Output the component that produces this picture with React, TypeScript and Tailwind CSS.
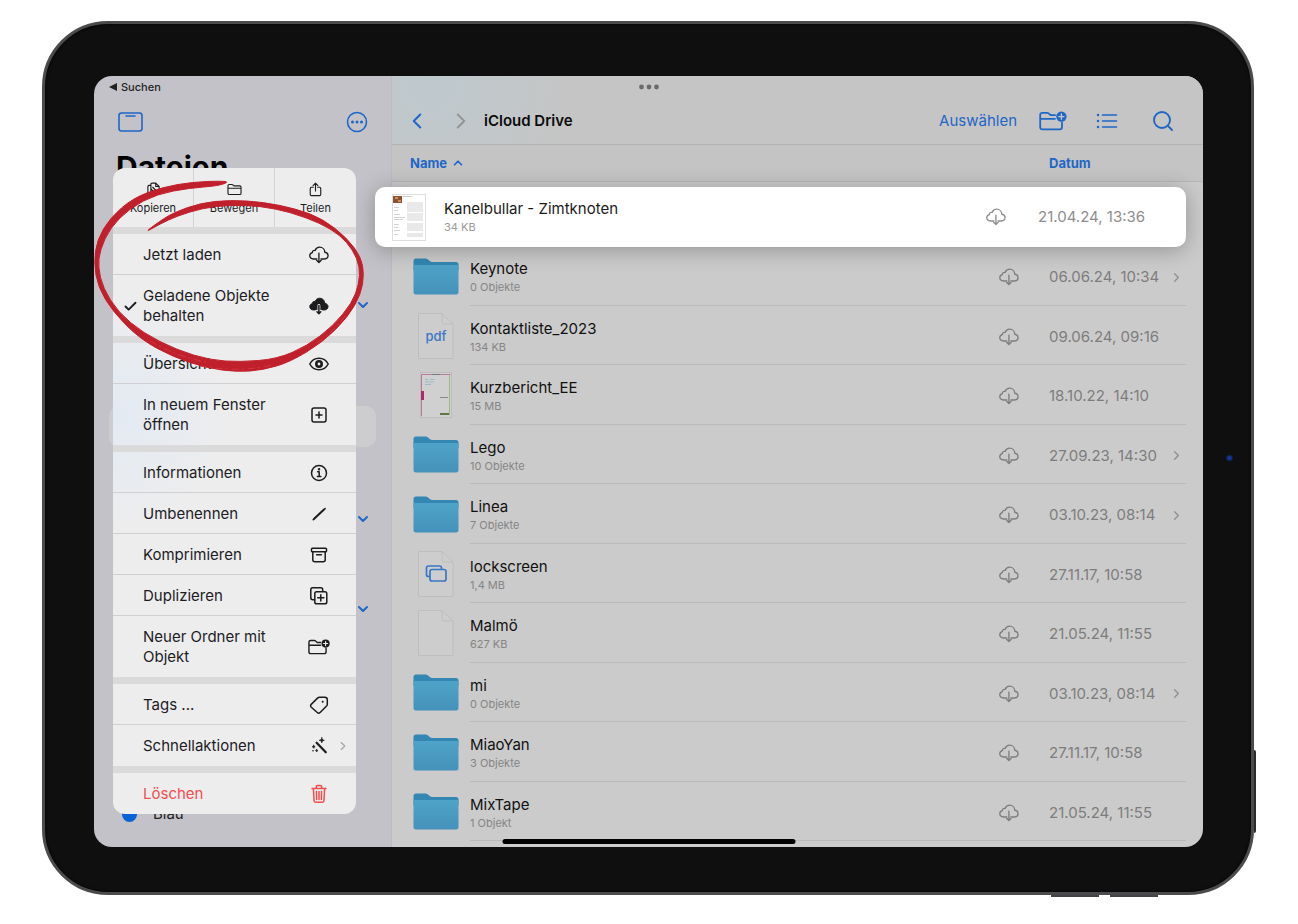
import type { ReactNode } from 'react'
import { ChevronDown, ChevronLeft, ChevronRight, ChevronUp, Check, Search } from 'lucide-react'

type Kind = 'folder' | 'pdf' | 'report' | 'image' | 'blank'

interface FileItem {
  name: string
  info: string
  date: string
  kind: Kind
  opens?: boolean
}

interface MenuItem {
  label: string
  icon: ReactNode
  checked?: boolean
  submenu?: boolean
  danger?: boolean
}

const files: FileItem[] = [
  { name: 'Keynote', info: '0 Objekte', date: '06.06.24, 10:34', kind: 'folder', opens: true },
  { name: 'Kontaktliste_2023', info: '134 KB', date: '09.06.24, 09:16', kind: 'pdf' },
  { name: 'Kurzbericht_EE', info: '15 MB', date: '18.10.22, 14:10', kind: 'report' },
  { name: 'Lego', info: '10 Objekte', date: '27.09.23, 14:30', kind: 'folder', opens: true },
  { name: 'Linea', info: '7 Objekte', date: '03.10.23, 08:14', kind: 'folder', opens: true },
  { name: 'lockscreen', info: '1,4 MB', date: '27.11.17, 10:58', kind: 'image' },
  { name: 'Malmö', info: '627 KB', date: '21.05.24, 11:55', kind: 'blank' },
  { name: 'mi', info: '0 Objekte', date: '03.10.23, 08:14', kind: 'folder', opens: true },
  { name: 'MiaoYan', info: '3 Objekte', date: '27.11.17, 10:58', kind: 'folder' },
  { name: 'MixTape', info: '1 Objekt', date: '21.05.24, 11:55', kind: 'folder' },
]

const CLOUD =
  'M4.6 13.2C2.4 13.2.8 11.7.8 9.7.8 8 2 6.8 3.5 6.4 3.5 4.8 4.8 3.9 6.4 4.2 7.2 2.1 9 .8 11.2.8c3 0 5.3 2.3 5.4 5.3 2 .3 3.4 1.7 3.4 3.5 0 2.1-1.6 3.6-3.8 3.6'

function CloudDown({ className }: { className?: string }) {
  return (
    <svg viewBox="0 0 21 18" width="20" height="18" fill="none" stroke="currentColor" strokeWidth="1.4" strokeLinecap="round" strokeLinejoin="round" className={className}>
      <path d={`${CLOUD}h-3.6M4.6 13.2h3.6`} />
      <path d="M10.4 7v9.8M8 14.6l2.4 2.4 2.4-2.4" />
    </svg>
  )
}

function CloudDownFilled() {
  return (
    <svg viewBox="0 0 21 18" width="20" height="18" fill="none" strokeLinecap="round" strokeLinejoin="round">
      <path d={`${CLOUD}z`} fill="currentColor" stroke="currentColor" />
      <path d="M10.4 8.5v8M8 14.6l2.4 2.4 2.4-2.4" stroke="#ededee" strokeWidth="3" />
      <path d="M10.4 8.5v8M8.4 15l2 2 2-2" stroke="currentColor" strokeWidth="1.6" />
    </svg>
  )
}

// Shared frame for the 20px line icons
function Glyph({ children, size = 20 }: { children: ReactNode; size?: number }) {
  return (
    <svg viewBox="0 0 20 20" width={size} height={size} fill="none" stroke="currentColor" strokeWidth="1.5" strokeLinecap="round" strokeLinejoin="round">
      {children}
    </svg>
  )
}

function FolderPlus({ width, height, plus }: { width: number; height: number; plus: string }) {
  return (
    <svg viewBox="0 0 28 20" width={width} height={height} fill="none" stroke="currentColor" strokeWidth="1.8" strokeLinecap="round" strokeLinejoin="round">
      <path d="M16 4.2h-4.2L9.6 2.4C9.2 2 8.8 1.8 8.2 1.8H3.4C2 1.8 1.2 2.6 1.2 4v12c0 1.6.8 2.4 2.4 2.4h17c1.6 0 2.4-.8 2.4-2.4v-4.4M1.2 7.8H16" />
      <circle cx="22.4" cy="5.6" r="5.2" fill="currentColor" stroke="none" />
      <path d="M22.4 3v5.2M19.8 5.6H25" stroke={plus} strokeWidth="1.4" />
    </svg>
  )
}

const icons = {
  copy: (
    <Glyph size={15}>
      <path d="M6 4.5H4A1.5 1.5 0 0 0 2.5 6v11A1.5 1.5 0 0 0 4 18.500h7.500" />
      <path d="M13 1.500H8A1.500 1.500 0 0 0 6.500 3v10.500A1.500 1.500 0 0 0 8 15h8a1.500 1.500 0 0 0 1.500-1.500V6zM13 1.500V6h4.500M9 7l5 5M6.500 9l5 5.500" />
    </Glyph>
  ),
  folder: (
    <Glyph size={15}>
      <path d="M1.300 5.200c0-1.200.6-1.800 1.800-1.800h3.500c.6 0 1 .2 1.400.5l1.300 1.200h7.600c1.200 0 1.800.6 1.800 1.800v8c0 1.200-.6 1.800-1.800 1.800H3.100c-1.200 0-1.800-.6-1.800-1.800zM1.300 8.300h17.400" />
    </Glyph>
  ),
  share: (
    <Glyph size={15}>
      <path d="M7 7H4.500C3.600 7 3 7.600 3 8.500v8c0 1 .6 1.600 1.500 1.600h11c1 0 1.500-.6 1.500-1.600v-8c0-.9-.5-1.500-1.500-1.500H13M10 12V1.800M6.800 4.800 10 1.600l3.200 3.200" />
    </Glyph>
  ),
  eye: (
    <Glyph>
      <path d="M.8 10C2.500 6.700 5.900 4.200 10 4.200s7.500 2.500 9.200 5.800c-1.700 3.300-5.100 5.800-9.200 5.800S2.500 13.300.8 10z" />
      <circle cx="10" cy="10" r="2.700" strokeWidth="2.600" />
    </Glyph>
  ),
  window: (
    <Glyph>
      <rect x="3" y="3" width="14" height="14" rx="2" />
      <path d="M10 7v6M7 10h6" />
    </Glyph>
  ),
  info: (
    <Glyph>
      <circle cx="10" cy="10" r="7.500" />
      <path d="M8.700 8.800h1.500v4.400M8.400 13.400h3.500" />
      <circle cx="10" cy="6.200" r=".5" fill="currentColor" />
    </Glyph>
  ),
  pencil: (
    <Glyph>
      <path d="M5.200 14.800 15 5.600" strokeWidth="2" />
      <path d="m4.200 15.800 1-1M15.800 4.900l.3-.3" />
    </Glyph>
  ),
  archive: (
    <Glyph>
      <rect x="2.500" y="3.200" width="15" height="3.600" rx=".8" />
      <path d="M3.800 6.800v8c0 1.300.7 2 2 2h8.400c1.300 0 2-.7 2-2v-8M7.600 9.800h4.800" />
    </Glyph>
  ),
  duplicate: (
    <Glyph>
      <path d="M5.500 13.700H3.700c-1.200 0-1.900-.7-1.900-1.900V3.700c0-1.200.7-1.900 1.900-1.900h8.100c1.200 0 1.900.7 1.900 1.900v1.800" />
      <rect x="5.800" y="5.800" width="12" height="12" rx="1.900" />
      <path d="M11.800 8.700v6.200M8.700 11.800h6.200" />
    </Glyph>
  ),
  tag: (
    <Glyph>
      <path d="m2.200 9.400 6.600-6.500c.5-.5 1-.7 1.700-.7h5.300c1.600 0 2.500.9 2.500 2.500v4.500c0 .8-.2 1.300-.7 1.800l-6.500 6.500c-.9.900-1.900.9-2.800 0l-6-5.300c-.9-.9-1-1.900-.1-2.800z" />
      <circle cx="13.700" cy="6.700" r="1" fill="currentColor" stroke="none" />
    </Glyph>
  ),
  wand: (
    <Glyph>
      <path d="m7.600 6.700 9.200 9.600" strokeWidth="2.200" />
      <path d="M12.800 1.800c.3 1.700.8 2.200 2.500 2.500-1.700.3-2.200.8-2.500 2.500-.3-1.700-.8-2.200-2.500-2.500 1.700-.3 2.200-.8 2.500-2.500zM4.700 9.300c.2 1 .5 1.300 1.500 1.500-1 .2-1.300.5-1.500 1.500-.2-1-.5-1.300-1.500-1.500 1-.2 1.300-.5 1.500-1.500zM7.700 13.500c.1.800.3 1 1.100 1.100-.8.200-1 .4-1.100 1.200-.2-.8-.4-1-1.200-1.200.8-.1 1-.3 1.200-1.100z" fill="currentColor" strokeWidth=".8" />
      <circle cx="4" cy="14.800" r=".8" fill="currentColor" stroke="none" />
    </Glyph>
  ),
  trash: (
    <Glyph>
      <path d="M3 4.500h14M7.300 4.300V2.800c0-.7.500-1.200 1.200-1.200h3c.7 0 1.200.5 1.200 1.200v1.500M4.400 4.700l.6 11.500c.1 1.300.8 2 2 2h6c1.200 0 1.900-.7 2-2l.6-11.500M10 7.500v8M7.400 7.500l.3 8M12.600 7.500l-.3 8" />
    </Glyph>
  ),
}

const quickActions = [
  { label: 'Kopieren', icon: icons.copy },
  { label: 'Bewegen', icon: icons.folder },
  { label: 'Teilen', icon: icons.share },
]

const menuGroups: MenuItem[][] = [
  [
    { label: 'Jetzt laden', icon: <CloudDown /> },
    { label: 'Geladene Objekte behalten', icon: <CloudDownFilled />, checked: true },
  ],
  [
    { label: 'Übersicht', icon: icons.eye },
    { label: 'In neuem Fenster öffnen', icon: icons.window },
  ],
  [
    { label: 'Informationen', icon: icons.info },
    { label: 'Umbenennen', icon: icons.pencil },
    { label: 'Komprimieren', icon: icons.archive },
    { label: 'Duplizieren', icon: icons.duplicate },
    { label: 'Neuer Ordner mit Objekt', icon: <FolderPlus width={22} height={16} plus="#ededee" /> },
  ],
  [
    { label: 'Tags ...', icon: icons.tag },
    { label: 'Schnellaktionen', icon: icons.wand, submenu: true },
  ],
  [{ label: 'Löschen', icon: icons.trash, danger: true }],
]

function FolderIcon() {
  return (
    <svg viewBox="0 0 46 37" width="46" height="37">
      <defs>
        <linearGradient id="folder" x1="0" y1="0" x2="0" y2="1">
          <stop offset="0" stopColor="#4fa3c8" />
          <stop offset="1" stopColor="#4591bb" />
        </linearGradient>
      </defs>
      <path d="M.5 3C.5 1.500 1.500.5 3 .5h9.500c1 0 1.800.3 2.500 1l2 1.700c.7.6 1.300.8 2.200.8H43c1.500 0 2.500 1 2.500 2.500V12H.5z" fill="#3486b3" />
      <path d="M.5 7h45v27c0 1.500-.8 2.500-2.300 2.500H2.800C1.300 36.500.5 35.500.5 34z" fill="url(#folder)" />
    </svg>
  )
}

function PageIcon({ children }: { children?: ReactNode }) {
  return (
    <svg viewBox="0 0 36 46" width="36" height="46" fill="none" stroke="#bebebe">
      <path d="M.5.5h23.500l11 10.500v34.500H.5z" fill="#cdcdcd" />
      <path d="M24 .5V9c0 1.300.7 2 2 2h9" />
      {children}
    </svg>
  )
}

function FileIcon({ kind }: { kind: Kind }) {
  if (kind === 'folder') return <FolderIcon />
  if (kind === 'report') {
    return (
      <svg viewBox="0 0 32 46" width="32" height="46">
        <rect x=".5" y=".5" width="31" height="45" fill="#d0d0d0" stroke="#bdbdbd" />
        <path d="M1.500 44V2.500h29" fill="none" stroke="#b87a9b" />
        <path d="M29.500 3v40" stroke="#9fb583" />
        <path d="M12 2.500h8" stroke="#777" />
        <rect x="1" y="19" width="3" height="9" fill="#b3246b" />
        <path d="M5 7.500h3M10 7.500h5M5 10h9M5 12.500h6" stroke="#9fb9c6" />
        <path d="M20 25.500h8" stroke="#888" />
        <path d="M20 42h9" stroke="#5d7a45" strokeWidth="2" />
      </svg>
    )
  }
  return (
    <span className="relative block">
      <PageIcon>
        {kind === 'image' && (
          <g stroke="#3b77c4" strokeWidth="1.700">
            <path d="M12 25.500h-1.500c-1.300 0-2-.7-2-2V17c0-1.300.7-2 2-2h11c1.300 0 2 .7 2 2v1" />
            <rect x="12" y="18.500" width="16" height="11.500" rx="2" />
          </g>
        )}
      </PageIcon>
      {kind === 'pdf' && (
        <span className="absolute inset-0 flex items-center justify-center text-[13px] font-medium text-[#3b77c4]">pdf</span>
      )}
    </span>
  )
}

function RecipeThumb() {
  const lines = [9, 11, 13, 15, 17, 20, 22, 24, 26, 30, 32, 34, 36, 40, 42]
  return (
    <svg viewBox="0 0 34 47" width="34" height="47">
      <rect x=".5" y=".5" width="33" height="46" fill="#fff" stroke="#dedede" />
      <rect x="1" y="2" width="9" height="7" fill="#8a5232" />
      <path d="M3 4h3M6 7h3" stroke="#d8a878" strokeWidth="1.500" />
      <path d="M11 2.500h9" stroke="#ccc" />
      {lines.map((y) => (
        <path key={y} d={`M15 ${y}h16`} stroke="#d2d2d2" />
      ))}
      <path d="M2 13.500h5M2 16.500h4M2 20.500h6M2 23.500h11M2 25.500h9M2 30.500h5M2 33.500h4M2 36.500h6M2 40.500h4" stroke="#d2d2d2" />
    </svg>
  )
}

// Outline of the hand drawn marker ring
const ringPoints = [
  [144, 233], [160, 221], [173, 213], [200, 203], [230, 200], [263, 202], [297, 209], [323, 219], [347, 238],
  [361, 257], [364, 274], [361, 294], [348, 317], [323, 342], [290, 362], [263, 370], [237, 372], [207, 368],
  [173, 357], [140, 339], [113, 312], [98, 287], [94, 263], [97, 240], [110, 218], [133, 198], [163, 187],
  [193, 182], [221, 181], [229, 182], [217, 186], [190, 188], [157, 194], [130, 208], [110, 228], [100, 250],
  [98, 267], [103, 288], [118, 312], [143, 333], [177, 350], [210, 360], [240, 362], [277, 359], [307, 346],
  [333, 326], [352, 303], [359, 284], [360, 267], [353, 250], [340, 235], [320, 223], [290, 212], [260, 206],
  [230, 205], [203, 208], [177, 216], [160, 224],
]

function smoothPath(points: number[][]) {
  const mid = (a: number[], b: number[]) => `${(a[0] + b[0]) / 2} ${(a[1] + b[1]) / 2}`
  const last = points[points.length - 1]
  const curves = points.map((p, i) => `Q${p[0]} ${p[1]} ${mid(p, points[(i + 1) % points.length])}`)
  return `M${mid(last, points[0])}${curves.join('')}Z`
}

function MarkerRing() {
  return (
    <svg viewBox="94 176 274 200" width="274" height="200" aria-hidden="true" className="pointer-events-none absolute left-0 top-[100px] z-20 overflow-visible">
      <path d={smoothPath(ringPoints)} fill="#c0202c" stroke="#c0202c" strokeWidth="1" />
      <path d="M200 366c20 4 50 5 72-1M150 341c20 12 40 18 60 22M345 316c-9 12-18 21-30 28" fill="none" stroke="#cf3540" strokeWidth="1" strokeDasharray="7 3 2 4" />
    </svg>
  )
}

function ContextMenu() {
  return (
    <div role="menu" className="absolute left-[19px] top-[92px] z-10 w-[243px] overflow-hidden rounded-xl bg-[#ededee] bg-[radial-gradient(circle_at_0_38%,#e2eaf2,transparent_24%)] text-[#1c1c1e]">
      <div className="grid h-[66px] grid-cols-3 divide-x divide-[#d3d3d5] border-b-[7px] border-[#dadadb]">
        {quickActions.map((action) => (
          <button key={action.label} role="menuitem" className="flex flex-col items-center gap-[3px] pt-[14px] text-[11px] leading-4">
            {action.icon}
            {action.label}
          </button>
        ))}
      </div>
      {menuGroups.map((group) => (
        <div key={group[0].label} className="border-b-[7px] border-[#dadadb] last:border-b-0">
          {group.map((item) => (
            <button
              key={item.label}
              role="menuitem"
              className={`grid w-full grid-cols-[30px_1fr_22px_26px] items-center border-b border-[#d0d0d2] pb-[9px] pt-[11px] text-left text-[15px] leading-5 last:border-transparent ${item.danger ? 'text-[#ee4f4f]' : ''}`}
            >
              <span className="flex justify-center pl-1">{item.checked && <Check size={15} strokeWidth={3} />}</span>
              <span className="pr-5">{item.label}</span>
              <span className="flex h-5 items-center justify-center">{item.icon}</span>
              <span className="flex justify-center">
                {item.submenu && <ChevronRight size={14} strokeWidth={2} className="text-[#a5a5a8]" />}
              </span>
            </button>
          ))}
        </div>
      ))}
    </div>
  )
}

function SectionToggle({ label, className }: { label: string; className: string }) {
  return (
    <button aria-label={label} className={`flex h-5 items-center justify-end pr-5 text-[#1f67c6] ${className}`}>
      <ChevronDown size={16} strokeWidth={3} />
    </button>
  )
}

function Sidebar() {
  return (
    <aside className="flex w-[298px] shrink-0 flex-col border-r border-[#bcbbc0] bg-[#c3c2c8] text-black">
      <button className="flex h-[22px] items-center gap-1 pl-[15px] text-[11px] font-medium text-[#222]">
        <svg viewBox="0 0 8 8" width="8" height="8" fill="currentColor">
          <path d="M0 4l8-4v8z" />
        </svg>
        Suchen
      </button>
      <div className="flex h-[47px] items-center justify-between pl-6 pr-[23px] text-[#1f67c6]">
        <button aria-label="Seitenleiste">
          <svg viewBox="0 0 25 20" width="25" height="20" fill="none" stroke="currentColor" strokeWidth="1.600" strokeLinecap="round">
            <rect x="1" y="1" width="23" height="18" rx="2.500" />
            <path d="M8 4h9" />
          </svg>
        </button>
        <button aria-label="Mehr">
          <svg viewBox="0 0 22 22" width="22" height="22" fill="none" stroke="currentColor" strokeWidth="1.600">
            <circle cx="11" cy="11" r="9.500" />
            <g fill="currentColor" stroke="none">
              <circle cx="6.500" cy="11" r="1.500" />
              <circle cx="11" cy="11" r="1.500" />
              <circle cx="15.500" cy="11" r="1.500" />
            </g>
          </svg>
        </button>
      </div>
      <h1 className="h-11 pl-[22px] text-[30px] font-bold leading-[44px]">Dateien</h1>
      <SectionToggle label="Favoriten" className="mt-[106px]" />
      <div className="mx-[15px] mt-[91px] h-[41px] rounded-[10px] bg-[#cdcdcf]" />
      <SectionToggle label="Speicherorte" className="mt-[62px]" />
      <SectionToggle label="Tags" className="mt-[70px]" />
      <div className="mt-[185px] flex h-5 items-center gap-4 pl-7 text-[15px] text-[#222]">
        <span className="size-[15px] rounded-full bg-[#0a62d4]" />
        Blau
      </div>
    </aside>
  )
}

function LiftedRow() {
  return (
    <div className="absolute -bottom-px -left-[17px] right-[17px] top-[5px] flex items-center rounded-[10px] bg-white pl-[17px] shadow-[0_3px_22px_rgba(0,0,0,0.28)]">
      <RecipeThumb />
      <div className="flex-1 pl-[18px]">
        <div className="text-[15px] leading-5 text-[#1a1a1a]">Kanelbullar - Zimtknoten</div>
        <div className="text-[11px] leading-4 text-[#9a9a9a]">34 KB</div>
      </div>
      <CloudDown className="text-[#8e8e8e]" />
      <div className="ml-8 w-[148px] shrink-0 text-[15px] leading-5 text-[#8e8e8e]">21.04.24, 13:36</div>
    </div>
  )
}

function FileTable() {
  return (
    <table className="w-full table-fixed border-separate border-spacing-0 text-left text-[15px] leading-5">
      <colgroup>
        <col className="w-[78px]" />
        <col />
        <col className="w-[50px]" />
        <col className="w-[137px]" />
        <col className="w-[17px]" />
      </colgroup>
      <thead className="text-[13px] text-[#1f67c6]">
        <tr className="h-[37px] bg-[#c4c4c4]">
          <th colSpan={3} className="border-b border-[#b8b8b8] pl-[18px] font-bold">
            <button className="flex items-center gap-1">
              Name
              <ChevronUp size={14} strokeWidth={3} />
            </button>
          </th>
          <th colSpan={2} className="border-b border-[#b8b8b8] font-bold">
            <button>Datum</button>
          </th>
        </tr>
      </thead>
      <tbody>
        <tr className="h-[64px]">
          <td colSpan={5} className="relative">
            <LiftedRow />
          </td>
        </tr>
        {files.map((file) => (
          <tr key={file.name} className="odd:h-[59px] even:h-[60px]">
            <td className="p-0">
              <span className="flex justify-center pl-[10px]">
                <FileIcon kind={file.kind} />
              </span>
            </td>
            <td className="border-b border-[#bababa] p-0 pt-[3px]">
              <div className="text-[#111]">{file.name}</div>
              <div className="text-[11px] leading-4 text-[#858585]">{file.info}</div>
            </td>
            <td className="border-b border-[#bababa] p-0 pt-[3px] text-[#7d7d7d]">
              <CloudDown />
            </td>
            <td className="border-b border-[#bababa] p-0 pt-[3px] text-[#7d7d7d]">
              <span className="flex items-center justify-between pr-[2px]">
                {file.date}
                {file.opens && <ChevronRight size={15} strokeWidth={2} className="text-[#8e8e8e]" />}
              </span>
            </td>
            <td className="p-0" />
          </tr>
        ))}
      </tbody>
    </table>
  )
}

function Browser() {
  return (
    <main className="min-w-0 flex-1 bg-[#cbcbcb] pb-[6px]">
      <header className="border-b border-[#b3b3b3] bg-[#c5c5c5] bg-[radial-gradient(circle_at_5%_20%,#bec9cd,transparent_18%)] pb-[2px] pt-6">
        <div className="flex h-[42px] items-center pl-3 pr-7 text-[15px] text-[#1f67c6]">
          <button aria-label="Zurück">
            <ChevronLeft size={26} strokeWidth={1.800} />
          </button>
          <button aria-label="Vorwärts" className="ml-[18px] text-[#949494]">
            <ChevronRight size={26} strokeWidth={1.800} />
          </button>
          <h2 className="ml-[10px] flex-1 font-semibold text-[#0b0b0b]">iCloud Drive</h2>
          <button>Auswählen</button>
          <button aria-label="Neuer Ordner" className="ml-[22px]">
            <FolderPlus width={28} height={20} plus="#c5c5c5" />
          </button>
          <button aria-label="Darstellung" className="ml-[29px]">
            <svg viewBox="0 0 22 18" width="22" height="18" stroke="currentColor" strokeWidth="1.600" strokeLinecap="round">
              <path d="M6.500 3h14M6.500 9h14M6.500 15h14" />
              <path d="M2 3h.1M2 9h.1M2 15h.1" strokeWidth="2.400" />
            </svg>
          </button>
          <button aria-label="Suchen" className="ml-[33px]">
            <Search size={24} strokeWidth={1.900} />
          </button>
        </div>
      </header>
      <FileTable />
    </main>
  )
}

export default function App() {
  return (
    <div className="min-h-screen bg-white pb-[29px] pl-[42px] pr-[44px] pt-[21px] font-[Inter,'Liberation_Sans',sans-serif]">
      <div className="relative rounded-[66px] border-[3px] border-[#4b4b4e] bg-[#0f0f10] pb-[45px] pl-[49px] pr-[48px] pt-[52px] shadow-[inset_0_0_3px_#000]">
        {/* Hardware buttons and camera */}
        <span className="absolute -right-[5px] bottom-[59px] h-[83px] w-[2px] rounded-r bg-[#2b2b2e]" />
        <span className="absolute -bottom-[5px] right-[152px] h-[2px] w-[48px] bg-[#444447]" />
        <span className="absolute -bottom-[5px] right-[93px] h-[2px] w-[48px] bg-[#444447]" />
        <span className="absolute right-[18px] top-1/2 size-[7px] -translate-y-1/2 rounded-full border border-[#0b2230] bg-[#15309a]" />

        <div className="relative flex overflow-hidden rounded-[18px]">
          <Sidebar />
          <Browser />
          <ContextMenu />
          <MarkerRing />
          <button aria-label="Multitasking" className="absolute left-1/2 top-2 -translate-x-1/2">
            <svg viewBox="0 0 20 6" width="20" height="6" fill="#6b6b6b">
              <circle cx="2.500" cy="3" r="2.400" />
              <circle cx="10" cy="3" r="2.400" />
              <circle cx="17.500" cy="3" r="2.400" />
            </svg>
          </button>
          <span className="absolute bottom-[3px] left-1/2 z-20 h-[5px] w-[293px] -translate-x-1/2 rounded-full bg-black" />
        </div>
      </div>
    </div>
  )
}
